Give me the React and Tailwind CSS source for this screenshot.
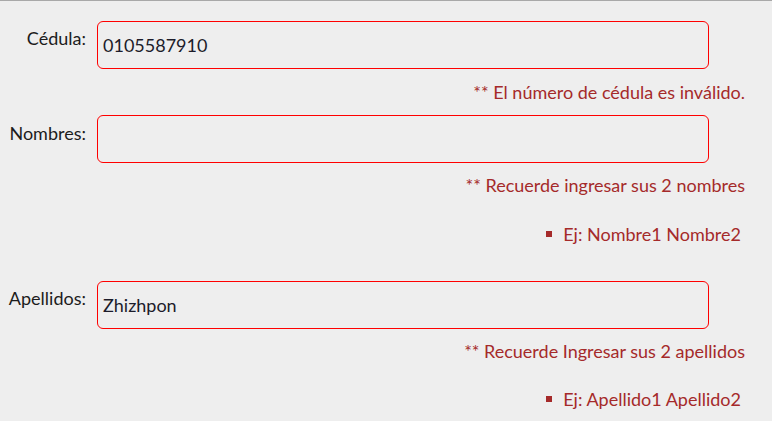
export default function App() {
  const font = { fontFamily: "Lato, 'Liberation Sans', sans-serif" };
  return (
    <div className="min-h-[421px] w-full bg-[#eeeeee] border-t border-[#a8a8a8] text-[18px] leading-[24px]" style={font}>
      <div className="pt-[20px] pr-[27px]">
        {/* Cédula */}
        <div className="flex items-start">
          <label className="w-[86px] shrink-0 text-right pt-[5px] text-[#1c1c1c]">Cédula:</label>
          <div className="ml-[11px] w-[612px] h-[48px] border border-[#ff0000] rounded-[6px] flex items-center px-[5px] text-[#1c1c2a]">
            0105587910
          </div>
        </div>
        <div className="mt-[11px] text-right text-[#a52a2a]">** El número de cédula es inválido.</div>

        {/* Nombres */}
        <div className="mt-[11px] flex items-start">
          <label className="w-[86px] shrink-0 text-right pt-[6px] text-[#1c1c1c]">Nombres:</label>
          <div className="ml-[11px] w-[612px] h-[48px] border border-[#ff0000] rounded-[6px]"></div>
        </div>
        <div className="mt-[10px] text-right text-[#a52a2a]">** Recuerde ingresar sus 2 nombres</div>
        <ul className="mt-[25px] flex justify-end pr-[4px] text-[#a52a2a]">
          <li className="flex items-center">
            <span className="w-[6px] h-[6px] bg-[#a52a2a] mr-[11px]"></span>
            Ej: Nombre1 Nombre2
          </li>
        </ul>

        {/* Apellidos */}
        <div className="mt-[35px] flex items-start">
          <label className="w-[86px] shrink-0 text-right pt-[5px] text-[#1c1c1c]">Apellidos:</label>
          <div className="ml-[11px] w-[612px] h-[48px] border border-[#ff0000] rounded-[6px] flex items-center px-[5px] text-[#1c1c2a]">
            Zhizhpon
          </div>
        </div>
        <div className="mt-[10px] text-right text-[#a52a2a]">** Recuerde Ingresar sus 2 apellidos</div>
        <ul className="mt-[24px] flex justify-end pr-[4px] text-[#a52a2a]">
          <li className="flex items-center">
            <span className="w-[6px] h-[6px] bg-[#a52a2a] mr-[11px]"></span>
            Ej: Apellido1 Apellido2
          </li>
        </ul>
      </div>
    </div>
  );
}
